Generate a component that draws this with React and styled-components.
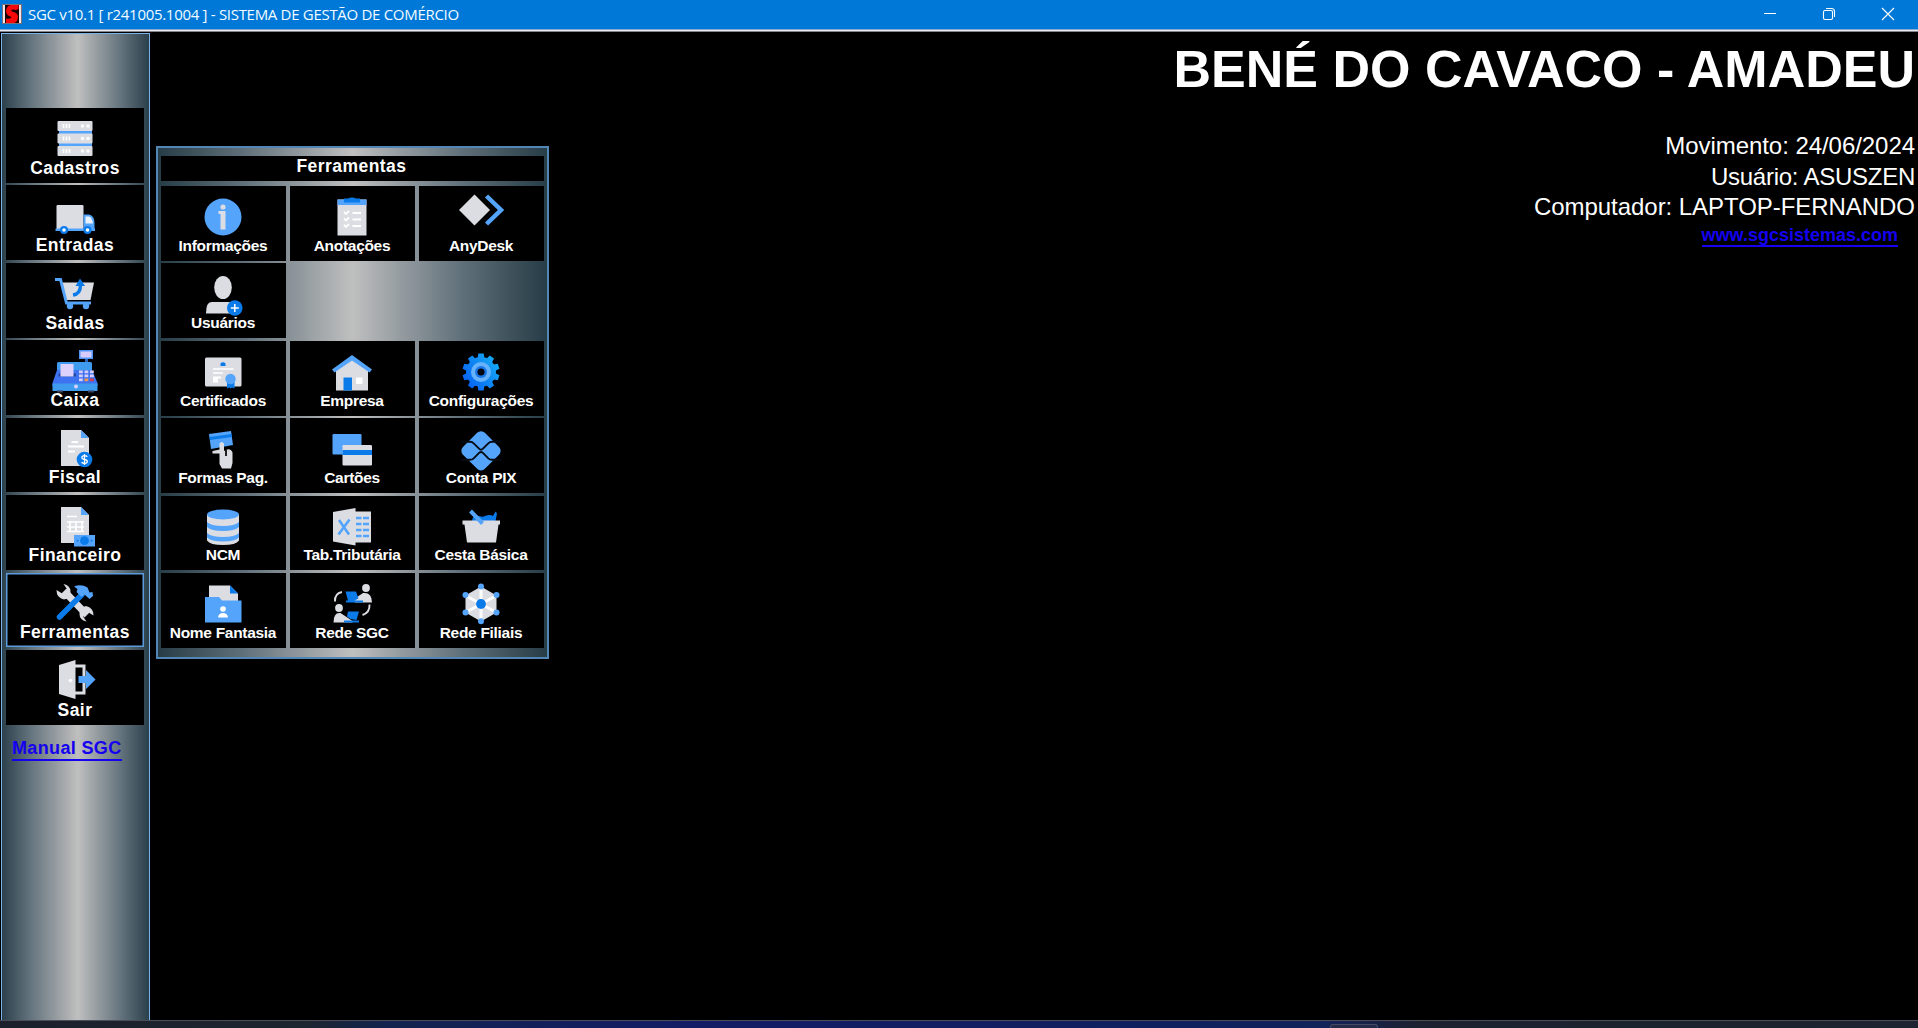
import React from 'react';
import styled, { createGlobalStyle, css } from 'styled-components';

const Global = createGlobalStyle`
  * { box-sizing: border-box; }
  html, body { margin: 0; padding: 0; background: #000; overflow: hidden; }
`;

const LIGHT = '#dbdde3';
const SKY = '#55a4fb';
const BLUE = '#0a7be9';

const Window = styled.div`
  width: 1918px;
  height: 1028px;
  display: flex;
  flex-direction: column;
  background: #000;
  color: #fff;
  font-family: "Liberation Sans", Arial, sans-serif;
`;

const TitleBar = styled.header`
  height: 32px;
  flex: none;
  display: flex;
  align-items: center;
  padding: 0 1px 4px 2px;
  background: linear-gradient(#0078d7 29px, #8aa9cf 29px, #8aa9cf 30px, #e6e8f0 30px, #e6e8f0 31px, #85878f 31px);
`;

const Title = styled.h1`
  margin: 0 auto 0 6px;
  font: 400 15px/28px "Open Sans", "Noto Sans", sans-serif;
  letter-spacing: -0.3px;
  white-space: nowrap;
  color: #f2fbff;
`;

const WindowButton = styled.button`
  width: 59px;
  height: 28px;
  padding: 0;
  border: 0;
  background: transparent;
  display: flex;
  align-items: center;
  justify-content: center;
  svg { display: block; }
`;

const Desktop = styled.main`
  flex: 1;
  min-height: 0;
  display: flex;
`;

const Sidebar = styled.nav`
  width: 149px;
  margin-left: 1px;
  margin-top: 1px;
  flex: none;
  display: flex;
  flex-direction: column;
  align-items: flex-start;
  padding: 74px 0 0 4px;
  border: 1px solid #78b2e8;
  border-bottom: 0;
  background: linear-gradient(90deg, #2b404b 0%, #60707a 18%, #bfbfbf 51.5%, #60707a 82%, #2b404b 100%);
`;

const SideList = styled.div`
  width: 138px;
  display: flex;
  flex-direction: column;
  gap: 2.75px;
`;

const tile = css`
  padding: 0;
  border: 0;
  background: #000;
  color: #fff;
  display: flex;
  flex-direction: column;
  align-items: center;
  justify-content: flex-end;
  font-family: inherit;
  font-weight: 700;
  white-space: nowrap;
  svg { display: block; flex: none; overflow: visible; }
`;

const SideButton = styled.button`
  ${tile}
  height: 74.7px;
  padding-bottom: 5px;
  font-size: 17.5px;
  line-height: 20px;
  letter-spacing: 0.45px;
  box-shadow: ${(p) => (p.$active ? 'inset 0 0 0 1.5px #5b9bdc' : 'none')};
  svg { margin-bottom: -2.5px; }
`;

const ManualLink = styled.a`
  margin: 13px 0 0 6px;
  font-size: 18px;
  line-height: 21px;
  font-weight: 700;
  letter-spacing: 0.35px;
  color: #1500f0;
  border-bottom: 2px solid #1500f0;
`;

const Panel = styled.section`
  width: 393px;
  height: 513px;
  margin: 114px 0 0 6px;
  flex: none;
  padding: 8px 3px 0 3px;
  display: flex;
  flex-direction: column;
  border: 2px solid #5286b5;
  background: linear-gradient(90deg, #263c46 0%, #60707a 22%, #bfbfbf 50%, #60707a 78%, #263c46 100%);
`;

const PanelTitle = styled.h2`
  width: 383px;
  height: 25px;
  margin: 0 0 5px;
  padding-right: 2px;
  flex: none;
  background: #000;
  text-align: center;
  font-size: 17.5px;
  line-height: 21px;
  letter-spacing: 0.45px;
`;

const ToolGrid = styled.div`
  width: 383px;
  display: grid;
  grid-template-columns: repeat(3, 125px);
  grid-auto-rows: 74.7px;
  gap: 2.75px 4px;
`;

const ToolButton = styled.button`
  ${tile}
  grid-column: ${(p) => p.$col || 'auto'};
  padding-right: 1px;
  padding-bottom: 7px;
  font-size: 15.5px;
  line-height: 17px;
  letter-spacing: -0.3px;
  svg { margin-bottom: -3.5px; }
`;

const Session = styled.aside`
  margin-left: auto;
  padding: 7px 3px 0 0;
  display: flex;
  flex-direction: column;
  align-items: flex-end;
  white-space: nowrap;
`;

const Company = styled.h2`
  margin: 0 0 32px;
  font-size: 52px;
  line-height: 60px;
  font-weight: 700;
`;

const InfoLine = styled.p`
  margin: 0;
  font-size: 24px;
  line-height: 30.7px;
  letter-spacing: ${(p) => p.$tracking || 0}px;
`;

const SiteLink = styled.a`
  margin: 3px 17px 0 0;
  font-size: 18px;
  line-height: 19px;
  font-weight: 700;
  color: #1500f0;
  border-bottom: 2px solid #1500f0;
`;

const Taskbar = styled.footer`
  height: 8px;
  flex: none;
  display: flex;
  border-top: 1px solid #4b4d57;
  background: linear-gradient(90deg, #1b202c 0%, #1d2530 16%, #12244e 20%, #121c66 36%, #10205e 62%, #12235a 69%, #1d2030 74%, #1b232e 85%, #1d2330 100%);
`;

const TaskItem = styled.span`
  width: 48px;
  height: 4px;
  margin: 3px 0 0 1330px;
  border: 1px solid #454b66;
  border-bottom: 0;
  border-radius: 3px 3px 0 0;
  background: #262c48;
`;

/* Icons: every drawing uses a 48 × 44 box, sitting directly on top of its label. */
const Icon = ({ children }) => (
  <svg width="48" height="44" viewBox="0 0 48 44" aria-hidden="true">{children}</svg>
);

const art = {
  server: (
    <Icon>
      <path d="M8 12h33v24H8z" fill={SKY} />
      {[5, 17.5, 30].map((y) => (
        <g key={y}>
          <rect x="6.5" y={y} width="35" height="10" rx="1" fill={LIGHT} />
          <path d={`M12.500 ${y + 3}v4M15.500 ${y + 3}v4M18.500 ${y + 3}v4`} stroke="#fff" strokeWidth="1.6" />
          <circle cx="31.500" cy={y + 5} r="1.7" fill="#fff" />
          <circle cx="37" cy={y + 5} r="1.7" fill="#fff" />
        </g>
      ))}
    </Icon>
  ),
  truck: (
    <Icon>
      <rect x="5.500" y="11" width="27" height="25" rx="1" fill={LIGHT} />
      <path d="M32.500 20.500h5.500q5.500 1 5.500 9v6h-11z" fill={SKY} />
      <path d="M34.500 22.500h3.500q3 1 4 7h-7.500z" fill="#e8f1fd" />
      <path d="M4.500 34.500H44v2.500H4.500z" fill={SKY} />
      {[13, 36.500].map((x) => (
        <g key={x}><circle cx={x} cy="36" r="4" fill={BLUE} /><circle cx={x} cy="36" r="1.8" fill="#fff" /></g>
      ))}
    </Icon>
  ),
  cart: (
    <Icon>
      <path d="M11 11.500h32L39.500 29H15z" fill={LIGHT} />
      <path d="M4 8.500h5.500l6 23.500H40" fill="none" stroke={SKY} strokeWidth="3" />
      <circle cx="19" cy="35" r="3.200" fill={SKY} /><circle cx="35" cy="35" r="3.200" fill={SKY} />
      <path d="M22 24q7.500-1 7.500-10" fill="none" stroke={BLUE} strokeWidth="3.400" />
      <path d="M24.500 15L29 7.500l5 7.500z" fill={BLUE} />
    </Icon>
  ),
  register: (
    <Icon>
      <path d="M34 9h3v5h-3z" fill="#2d63bb" />
      <rect x="28" y="1" width="14" height="9" fill="#4d94f5" /><rect x="29.500" y="2.500" width="11" height="6" fill="#d5ccfb" />
      <rect x="6" y="13" width="35" height="20" rx="1.500" fill="#3f9bee" />
      <path d="M6 21L1.500 34v3h45v-3L41 21z" fill="#3e72f0" />
      <path d="M1.500 34.500h45V42h-45z" fill="#3f9bee" />
      <path d="M7.500 24.500h17.500v3H7.500z" fill="#24449c" /><rect x="9.500" y="15" width="13" height="12.500" fill="#ddd2fb" />
      {[28, 33.500, 39].map((x) => [21.500, 25.500].map((y) => <rect key={x + '-' + y} x={x} y={y} width="3.800" height="2.700" fill="#d5ccfb" />))}
      <rect x="28" y="29.500" width="3.800" height="2.700" fill="#d5ccfb" /><rect x="33.500" y="29.500" width="3.800" height="2.700" fill="#f39a4a" /><rect x="39" y="29.500" width="3.800" height="2.700" fill="#d43b4e" />
      <circle cx="25" cy="37.500" r="1.900" fill="#ddd2fb" />
      <path d="M6 41.500h6v2H6zM37 41.500h6v2h-6z" fill="#38435f" />
    </Icon>
  ),
  invoice: (
    <Icon>
      <path d="M10 4h20l8 8v28H10z" fill={LIGHT} /><path d="M30 4l8 8h-8z" fill={SKY} />
      <path d="M20.500 16h6.500M17 20.500h16M17 25.500h7" stroke="#fff" strokeWidth="1.900" />
      <circle cx="33.500" cy="33.500" r="7.800" fill={BLUE} />
      <path d="M36.300 30.800q-.8-1.200-2.800-1.200-2.600.1-2.600 1.900 0 1.600 2.700 2 2.700.4 2.700 2.100 0 1.800-2.700 1.900-2.100 0-3-1.400M33.500 28v11" fill="none" stroke="#fff" strokeWidth="1.300" />
    </Icon>
  ),
  finance: (
    <Icon>
      <path d="M10 4h20l8 8v28H10z" fill={LIGHT} /><path d="M30 4l8 8h-8z" fill={SKY} />
      <path d="M16 13.500h10M16 19h17M16 24h17M16 28.500h17M19 18v11M25 18v11M31 18v11" stroke="#fff" strokeWidth="1.700" />
      <rect x="23" y="32" width="21" height="11.500" fill={SKY} />
      <circle cx="33.500" cy="37.700" r="4.400" fill={BLUE} /><circle cx="26.500" cy="37.700" r="1" fill={BLUE} /><circle cx="40.500" cy="37.700" r="1" fill={BLUE} />
    </Icon>
  ),
  tools: (
    <Icon>
      <path d="M13 10L36 34" stroke={LIGHT} strokeWidth="7" />
      <path d="M5.500 9q0 8 7.500 9.500 6.500-1 6.500-8 0-6-7-7.500L16 8l-4 5z" fill={LIGHT} />
      <path d="M42.500 34.500q0-8-7.500-9.500-6.500 1-6.500 8 0 6 7 7.500L32 35.500l4-5z" fill={LIGHT} />
      <path d="M8.500 36L31 13.500" stroke={BLUE} strokeWidth="5.500" strokeLinecap="round" />
      <path d="M23 5.500q7-3 13.500 1l2 5 3-.5.500 4-3.500 3-5-4.500-3 2.500-5-5 1-3z" fill={SKY} />
    </Icon>
  ),
  exit: (
    <Icon>
      <path d="M24 8h9v27h-9" fill="none" stroke={LIGHT} strokeWidth="3" />
      <path d="M8 7l16.500-5v39L8 36z" fill={LIGHT} /><circle cx="19.500" cy="22.500" r="1.700" fill="#fff" />
      <path d="M27.500 18h7.500v-6l9.500 9.500-9.500 9.500V25h-7.500z" fill={SKY} />
    </Icon>
  ),
  info: (
    <Icon>
      <circle cx="24" cy="21" r="18.500" fill={SKY} />
      <circle cx="24" cy="11" r="2.600" fill={LIGHT} />
      <path d="M19.500 15h7v18.500h-5V18h-2z" fill={LIGHT} />
    </Icon>
  ),
  notes: (
    <Icon>
      <path d="M9.500 3.500h29v36h-29z" fill={LIGHT} /><path d="M9.500 3.500h29v5.500h-29z" fill={SKY} />
      <path d="M16 2.500h4Q24 .5 28 2.500h4v4H16z" fill={BLUE} />
      {[17, 23.500, 30].map((y) => <path key={y} d={`M16 ${y - 1}l2 2 3-3M24.500 ${y}H33`} fill="none" stroke="#fff" strokeWidth="1.800" />)}
    </Icon>
  ),
  anydesk: (
    <Icon>
      <path d="M2 14L17.500-1.500 33 14 17.500 29.500z" fill={LIGHT} />
      <path d="M29.500 0L44 14 29.500 28" fill="none" stroke={SKY} strokeWidth="4.500" />
    </Icon>
  ),
  user: (
    <Icon>
      <ellipse cx="24" cy="13.500" rx="8.800" ry="11.500" fill={LIGHT} />
      <path d="M7 39.500q0-11.500 5.500-11.500h23l5.500 11.500z" fill={LIGHT} />
      <circle cx="35.800" cy="34" r="7.800" fill={BLUE} />
      <path d="M35.800 30v8M31.800 34h8" stroke="#fff" strokeWidth="1.500" />
    </Icon>
  ),
  certificate: (
    <Icon>
      <rect x="6" y="6.500" width="36.500" height="29" rx="1.500" fill={LIGHT} />
      <path d="M21.500 12.500q2.500-2.500 5 0v2.500h-5z" fill={BLUE} />
      <path d="M14 18h20.500M14 22h10" stroke="#fff" strokeWidth="1.700" /><path d="M14 25.500h8v2h-3v4h-5z" fill="#fff" />
      <path d="M28 31h7.500v6.500l-2.500-1-1.300 1-1.300-1-2.400 1z" fill={BLUE} /><circle cx="31.500" cy="28" r="5.200" fill={SKY} />
    </Icon>
  ),
  house: (
    <Icon>
      <path d="M8 18L24 6l16 12v21.500H8z" fill={LIGHT} />
      <path d="M4 18.500L24 4l20 14.500-2.500 3L24 9.500 6.500 21.500z" fill={SKY} />
      <path d="M15.500 26.500H24v13h-8.500z" fill={BLUE} /><rect x="28" y="26.500" width="6.500" height="6.500" rx="1" fill="#fff" />
    </Icon>
  ),
  gear: (
    <Icon>
      <defs>
        <linearGradient id="gearFill" gradientUnits="userSpaceOnUse" x1="8" y1="32" x2="40" y2="8"><stop offset="0" stopColor="#0763f2" /><stop offset="1" stopColor="#16abf5" /></linearGradient>
        <mask id="gearTeeth">
          {[0, 36, 72, 108, 144, 180, 216, 252, 288, 324].map((a) => <path key={a} d="M21.300 2.500h5.400l1 7h-7.400z" fill="#fff" transform={`rotate(${a} 24 21)`} />)}
          <circle cx="24" cy="21" r="15" fill="#fff" />
        </mask>
      </defs>
      <path d="M4 1h40v40H4z" fill="url(#gearFill)" mask="url(#gearTeeth)" />
      <circle cx="24" cy="21" r="10" fill="#66b2fb" /><circle cx="24" cy="21" r="6" fill="#1977e8" /><circle cx="24" cy="21" r="3.600" fill="#030812" />
    </Icon>
  ),
  payment: (
    <Icon>
      <path d="M10 5l22-3 2 14-22 4z" fill={SKY} /><path d="M10.500 8l22-3 .6 3-22 3z" fill={BLUE} />
      <path d="M20.500 35V14.500q2-3 4.500 0V22q6-4 8.500 1.500V34l-1.500 5.500h-9z" fill={LIGHT} />
      <path d="M21 20.500L13.500 22v2.500H21z" fill={LIGHT} /><path d="M27 20.500v6.500" stroke="#000" strokeWidth="1.700" />
    </Icon>
  ),
  cards: (
    <Icon>
      <rect x="4.500" y="5" width="29" height="20.500" rx="1.200" fill={SKY} />
      <rect x="14.500" y="16" width="29.500" height="20.500" rx="1.200" fill={LIGHT} /><path d="M14.500 21H44v5H14.500z" fill={BLUE} />
    </Icon>
  ),
  pix: (
    <Icon>
      <rect x="8.500" y="6.300" width="31" height="31" rx="5.500" fill={SKY} transform="rotate(45 24 21.800)" />
      <path d="M4 12.800h9q2.200 0 3.700 1.500l5.600 5.600q1.700 1.600 3.400 0l5.600-5.600q1.500-1.500 3.700-1.500h9M4 30.800h9q2.200 0 3.700-1.500l5.600-5.600q1.700-1.600 3.400 0l5.600 5.600q1.500 1.500 3.700 1.500h9" fill="none" stroke="#060b14" strokeWidth="1.900" />
    </Icon>
  ),
  database: (
    <Icon>
      <path d="M8 9h32v25.500q-3 4.500-16 4.500T8 34.500z" fill={LIGHT} />
      <path d="M8 16q4 4 16 4t16-4v5q-4 4-16 4T8 21zM8 27q4 4 16 4t16-4v4.500q-4 4-16 4t-16-4z" fill={SKY} />
      <ellipse cx="24" cy="8.500" rx="16" ry="5" fill={SKY} />
    </Icon>
  ),
  sheet: (
    <Icon>
      <path d="M26 5.500h17v31H26z" fill={LIGHT} />
      {[12, 18, 24, 30].map((y) => <path key={y} d={`M28 ${y}h5.500M35 ${y}h6`} stroke={SKY} strokeWidth="2.600" />)}
      <path d="M5 6l22.500-4v37.500L5 35.500z" fill={LIGHT} />
      <path d="M11 14l10 14.500M21.500 13.500l-11 15" stroke={SKY} strokeWidth="2.600" />
    </Icon>
  ),
  basket: (
    <Icon>
      <path d="M15 15q1-7 7-5 4 1.500 6 0 5-2 8 0l2.500-4.500 1.500 2-1.500 7.500z" fill={BLUE} />
      <path d="M5.500 14.500H43v4h-1.500L39 36.500H10L7.500 18.500h-2z" fill={LIGHT} />
      <path d="M13.500 5l12 12.500" stroke={SKY} strokeWidth="4" />
    </Icon>
  ),
  folder: (
    <Icon>
      <path d="M10 2.500h21l8 8v10H10z" fill={LIGHT} /><path d="M31 2.500l8 8h-8z" fill={BLUE} />
      <path d="M6 14h14l3 3.500h19.500v22H6z" fill={SKY} />
      <circle cx="24" cy="26" r="2.800" fill="#fff" /><path d="M19 34.500q.5-4.500 5-4.500t5 4.500z" fill="#fff" />
    </Icon>
  ),
  remote: (
    <Icon>
      <circle cx="38" cy="5" r="3.900" fill={LIGHT} /><path d="M24 17.500l11-7.500q9-1 9 9.500H27z" fill={LIGHT} /><path d="M17.500 8.500H28l2.500 7-8 4-2.500-2zM18 17.500h17v2H18z" fill={BLUE} />
      <circle cx="11" cy="25" r="3.900" fill={LIGHT} /><path d="M5.500 39.500q0-10.500 7-9.500l12 8v1.500z" fill={LIGHT} /><path d="M20 28.500h11l-2.500 8.500-6-1-3.500-2.500zM16 37.500h15v2H16z" fill={BLUE} />
      <path d="M7 18.500q-.5-8 7-9.500M41.500 21.500q.5 8-7 10.500" fill="none" stroke={LIGHT} strokeWidth="1.900" />
    </Icon>
  ),
  network: (
    <Icon>
      <path d="M24 3.500l15.500 9v17L24 38.500l-15.500-9v-17z" fill={LIGHT} />
      <path d="M24 3.500v35M8.500 12.500l31 17M39.500 12.500l-31 17" stroke="#fff" strokeWidth="3" />
      {[[24, 3.5], [39.5, 12], [39.5, 29.5], [24, 38.3], [8.5, 29.5], [8.5, 12]].map(([x, y]) => <circle key={x + '-' + y} cx={x} cy={y} r="3" fill={SKY} />)}
      <circle cx="24" cy="21" r="4.900" fill={BLUE} />
    </Icon>
  ),
};

const sideItems = [
  ['Cadastros', 'server'], ['Entradas', 'truck'], ['Saidas', 'cart'], ['Caixa', 'register'],
  ['Fiscal', 'invoice'], ['Financeiro', 'finance'], ['Ferramentas', 'tools'], ['Sair', 'exit'],
];

const toolItems = [
  ['Informações', 'info'], ['Anotações', 'notes'], ['AnyDesk', 'anydesk'],
  ['Usuários', 'user'],
  ['Certificados', 'certificate', 1], ['Empresa', 'house'], ['Configurações', 'gear'],
  ['Formas Pag.', 'payment'], ['Cartões', 'cards'], ['Conta PIX', 'pix'],
  ['NCM', 'database'], ['Tab.Tributária', 'sheet'], ['Cesta Básica', 'basket'],
  ['Nome Fantasia', 'folder'], ['Rede SGC', 'remote'], ['Rede Filiais', 'network'],
];

export default function App() {
  return (
    <Window>
      <Global />
      <TitleBar>
        <svg width="20" height="20" viewBox="0 0 20 20">
          <path d="M0 0h20v20H0z" fill="#7f6d77" /><path d="M1 1h18v18H1z" fill="#f3e5e5" /><path d="M3 1h14v18H3z" fill="#160000" />
          <path d="M16.500 1v4q-3 1.500-5 .5-3.500 0-1.500 2 6 1 6 5.500-.5 6-5 6H4v-4.500q5 1 5.500-1.500-5.500-1.500-5.500-6Q4.500 1.500 9 1z" fill="#f80808" />
        </svg>
        <Title>SGC v10.1 [ r241005.1004 ] - SISTEMA DE GESTÃO DE COMÉRCIO</Title>
        <WindowButton aria-label="Minimizar">
          <svg width="14" height="14" viewBox="0 0 14 14"><path d="M1 6.500h12" stroke="#fff" strokeWidth="1" /></svg>
        </WindowButton>
        <WindowButton aria-label="Restaurar">
          <svg width="14" height="14" viewBox="0 0 14 14" fill="none" stroke="#fff" strokeWidth="1.100"><rect x="1.500" y="3.500" width="9" height="9" rx="1.500" /><path d="M4 1.500h5.500q3 0 3 3V10" /></svg>
        </WindowButton>
        <WindowButton aria-label="Fechar">
          <svg width="14" height="14" viewBox="0 0 14 14"><path d="M1 1l12 12M13 1L1 13" stroke="#fff" strokeWidth="1.100" /></svg>
        </WindowButton>
      </TitleBar>
      <Desktop>
        <Sidebar>
          <SideList>
            {sideItems.map(([label, icon]) => (
              <SideButton key={label} $active={label === 'Ferramentas'}>{art[icon]}<span>{label}</span></SideButton>
            ))}
          </SideList>
          <ManualLink>Manual SGC</ManualLink>
        </Sidebar>
        <Panel>
          <PanelTitle>Ferramentas</PanelTitle>
          <ToolGrid>
            {toolItems.map(([label, icon, col]) => (
              <ToolButton key={label} $col={col}>{art[icon]}<span>{label}</span></ToolButton>
            ))}
          </ToolGrid>
        </Panel>
        <Session>
          <Company>BENÉ DO CAVACO - AMADEU</Company>
          <InfoLine $tracking={-0.05}>Movimento: 24/06/2024</InfoLine>
          <InfoLine $tracking={-0.25}>Usuário: ASUSZEN</InfoLine>
          <InfoLine $tracking={-0.05}>Computador: LAPTOP-FERNANDO</InfoLine>
          <SiteLink>www.sgcsistemas.com</SiteLink>
        </Session>
      </Desktop>
      <Taskbar><TaskItem /></Taskbar>
    </Window>
  );
}
